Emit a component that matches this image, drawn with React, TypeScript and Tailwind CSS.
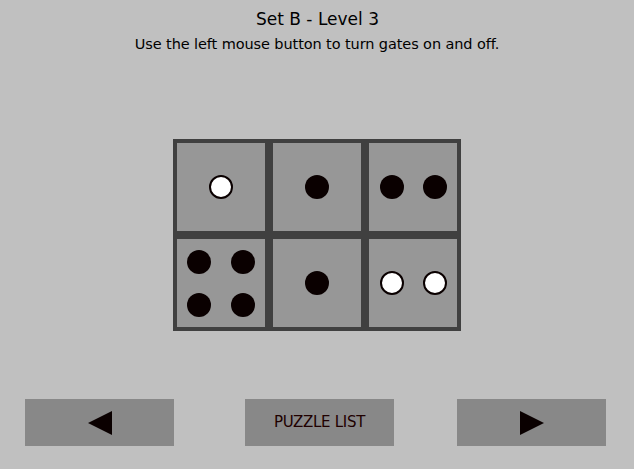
import React from "react";

const Dot = ({ white }: { white?: boolean }) => (
  <div
    className={
      white
        ? "w-[24px] h-[24px] rounded-full bg-white border-2 border-[#0a0000]"
        : "w-[24px] h-[24px] rounded-full bg-[#0a0000]"
    }
  />
);

const Cell = ({ children }: { children: React.ReactNode }) => (
  <div className="w-[96px] h-[96px] border-4 border-[#404040] bg-[#979797] flex items-center justify-center">
    {children}
  </div>
);

export default function App() {
  return (
    <div
      className="w-[634px] h-[469px] bg-[#c0c0c0] flex flex-col items-center text-black"
      style={{ fontFamily: '"DejaVu Sans", sans-serif' }}
    >
      <div className="mt-[8px] text-[17px] leading-[22px] ml-[1px]">Set B - Level 3</div>
      <div className="mt-[2px] text-[14.5px] leading-[24px] tracking-[-0.1px]">
        Use the left mouse button to turn gates on and off.
      </div>
      <div className="mt-[83px] grid grid-cols-3 w-[288px]">
        <Cell>
          <Dot white />
        </Cell>
        <Cell>
          <Dot />
        </Cell>
        <Cell>
          <div className="flex gap-[19px]">
            <Dot />
            <Dot />
          </div>
        </Cell>
        <Cell>
          <div className="grid grid-cols-2 gap-x-[20px] gap-y-[19px]">
            <Dot />
            <Dot />
            <Dot />
            <Dot />
          </div>
        </Cell>
        <Cell>
          <Dot />
        </Cell>
        <Cell>
          <div className="flex gap-[19px]">
            <Dot white />
            <Dot white />
          </div>
        </Cell>
      </div>
      <div className="mt-[68px] w-full flex">
        <button className="ml-[25px] w-[149px] h-[47px] bg-[#888888] flex items-center justify-center">
          <svg width="24" height="24" viewBox="0 0 24 24">
            <polygon points="0,12 24,0 24,24" fill="#0a0000" />
          </svg>
        </button>
        <button className="ml-[71px] w-[149px] h-[47px] bg-[#888888] flex items-center justify-center text-[15px] text-[#200000] tracking-[-0.3px]">
          PUZZLE LIST
        </button>
        <button className="ml-[63px] w-[149px] h-[47px] bg-[#888888] flex items-center justify-center">
          <svg width="24" height="24" viewBox="0 0 24 24">
            <polygon points="24,12 0,0 0,24" fill="#0a0000" />
          </svg>
        </button>
      </div>
    </div>
  );
}
